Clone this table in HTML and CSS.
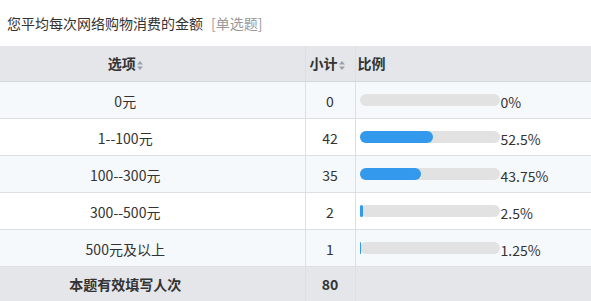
FILE: index.html
```html
<!DOCTYPE html>
<html>
<head>
<meta charset="utf-8">
<link rel="stylesheet" href="styles.css">
</head>
<body>
<div class="title">您平均每次网络购物消费的金额<span class="qtype">[单选题]</span></div>
<table class="stat">
  <colgroup><col class="c1"><col class="c2"><col class="c3"></colgroup>
  <thead>
    <tr>
      <th class="first">选项<span class="sort"><svg width="6" height="9" viewBox="0 0 6 9"><path d="M3 0L6 3.5H0Z" fill="#9aa0a8"/><path d="M3 9L6 5.5H0Z" fill="#9aa0a8"/></svg></span></th>
      <th class="count">小计<span class="sort"><svg width="6" height="9" viewBox="0 0 6 9"><path d="M3 0L6 3.5H0Z" fill="#9aa0a8"/><path d="M3 9L6 5.5H0Z" fill="#9aa0a8"/></svg></span></th>
      <th class="left">比例</th>
    </tr>
  </thead>
  <tbody>
    <tr class="odd"><td class="first">0元</td><td class="center">0</td><td class="ratio"><span class="bar"><span class="fill" style="width:0%"></span></span><span class="pct">0%</span></td></tr>
    <tr><td class="first">1--100元</td><td class="center">42</td><td class="ratio"><span class="bar"><span class="fill" style="width:52.5%"></span></span><span class="pct">52.5%</span></td></tr>
    <tr class="odd"><td class="first">100--300元</td><td class="center">35</td><td class="ratio"><span class="bar"><span class="fill" style="width:43.75%"></span></span><span class="pct">43.75%</span></td></tr>
    <tr><td class="first">300--500元</td><td class="center">2</td><td class="ratio"><span class="bar"><span class="fill" style="width:2.5%"></span></span><span class="pct">2.5%</span></td></tr>
    <tr class="odd"><td class="first">500元及以上</td><td class="center">1</td><td class="ratio"><span class="bar"><span class="fill" style="width:1.25%"></span></span><span class="pct">1.25%</span></td></tr>
  </tbody>
  <tfoot>
    <tr><td class="first">本题有效填写人次</td><td class="center">80</td><td></td></tr>
  </tfoot>
</table>
</body>
</html>
```
FILE: styles.css
```css
html, body {
  margin: 0;
  padding: 0;
  background: #fff;
}
body {
  font-family: "Noto Sans CJK SC", "Noto Sans", sans-serif;
  font-size: 14px;
  color: #333;
}
.title {
  height: 46px;
  line-height: 47px;
  padding-left: 7px;
  box-sizing: border-box;
  color: #333;
}
.qtype {
  color: #9a9a9a;
  margin-left: 8px;
}
.stat {
  width: 591px;
  border-collapse: collapse;
  table-layout: fixed;
}
.c1 { width: 305px; }
.c2 { width: 50px; }
.stat th, .stat td {
  height: 36px;
  padding: 0;
  border-bottom: 1px solid #dcdfe3;
  border-left: 1px solid #dcdfe3;
  box-sizing: border-box;
  vertical-align: middle;
  line-height: 18px;
}
.stat th:first-child, .stat td:first-child {
  border-left: none;
}
.stat thead th {
  background: #e4e6ea;
  font-weight: bold;
  height: 35px;
  border-bottom: 1px solid #d3d6da;
}
.stat tbody td {
  height: 37px;
  padding-top: 2px;
}
.odd td {
  background: #f6f9fc;
}
.stat tfoot td {
  background: #e4e6ea;
  font-weight: bold;
  height: 35px;
}
.center { text-align: center; }
.stat .first {
  text-align: center;
  padding-right: 54px;
}
.stat .count {
  text-align: center;
  padding-right: 6px;
}
.stat .left { text-align: left; padding-left: 2px; }
.sort {
  display: inline-block;
  margin-left: 1px;
  vertical-align: -1px;
}
.sort svg { display: block; }
.stat .ratio {
  padding-left: 4px;
  white-space: nowrap;
}
.bar {
  display: inline-block;
  width: 140px;
  height: 12px;
  background: #e2e2e2;
  border-radius: 6px;
  vertical-align: -1px;
}
.fill {
  display: block;
  height: 100%;
  background: #3399ec;
  border-radius: 6px;
}
.pct {
  margin-left: 1px;
  vertical-align: -3px;
}
```
